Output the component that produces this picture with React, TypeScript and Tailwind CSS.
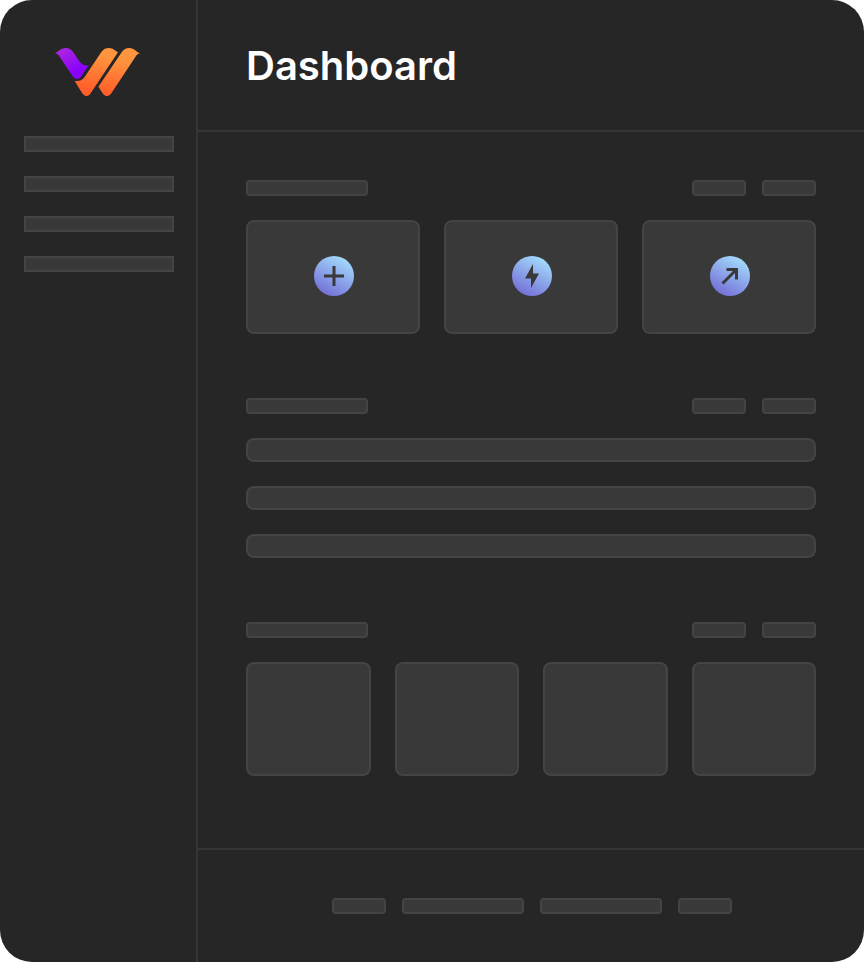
import React from "react";

type BlockProps = { className?: string; children?: React.ReactNode };

function Block({ className = "", children }: BlockProps) {
  return <div className={`border-2 border-[#444444] bg-[#393939] ${className}`}>{children}</div>;
}

function Logo() {
  return (
    <svg className="ml-[31px] h-12 w-[84px] overflow-visible" viewBox="30 30 252 144" fill="none">
      <defs>
        <linearGradient id="violet" x1="48" y1="30" x2="104" y2="118" gradientUnits="userSpaceOnUse">
          <stop stopColor="#AD28DC" />
          <stop offset="0.85" stopColor="#8800FF" />
        </linearGradient>
        <linearGradient id="orange" x1="190" y1="60" x2="172" y2="160" gradientUnits="userSpaceOnUse">
          <stop stopColor="#FF943E" />
          <stop offset="1" stopColor="#FF5F2A" />
        </linearGradient>
      </defs>
      <path
        d="M30 46C39 43 45 30 62 30C73 30 79 35 85 43L103 70C110 80 119 84 133 82C127 86 125 91 121 97L109 115C103 126 90 126 83 115L44 56C40 50 36 47 30 46Z"
        fill="url(#violet)"
      />
      <path
        d="M88 129C104 130 112 127 119 117L167 45C174 34 182 30 192 30C205 30 211 39 219 43L140 161C134 170 131 174 125 174C118 174 115 170 109 161L98 144C94 137 92 132 88 129Z"
        fill="url(#orange)"
      />
      <path
        d="M160 146L229 44C236 34 243 30 253 30C269 30 274 43 285 46C278 48 275 51 271 57L202 161C196 170 193 174 186 174C179 174 176 170 170 161Z"
        fill="url(#orange)"
      />
    </svg>
  );
}

function ActionCard({ children }: { children: React.ReactNode }) {
  return (
    <Block className="flex h-[114px] items-center justify-center rounded-lg pb-0.5 pl-0.5">
      <div className="flex size-10 items-center justify-center rounded-full bg-[linear-gradient(209deg,#A5E0FE_8%,#7066D3_95%)]">
        <svg className="size-10" viewBox="0 0 40 40" fill="none">
          {children}
        </svg>
      </div>
    </Block>
  );
}

function SectionHeading() {
  return (
    <div className="mb-6 flex gap-4">
      <Block className="mr-auto h-4 w-[122px] rounded" />
      <Block className="h-4 w-[54px] rounded" />
      <Block className="h-4 w-[54px] rounded" />
    </div>
  );
}

export default function App() {
  return (
    <div className="bg-white font-['Inter',sans-serif]">
      <div className="flex h-[962px] w-[864px] overflow-hidden rounded-[32px] bg-[#262626]">
        <aside className="flex w-[198px] shrink-0 flex-col border-r-2 border-[#353535] pl-6 pt-12">
          <Logo />
          <nav className="mt-10 flex flex-col gap-6">
            <Block className="h-4 w-[150px]" />
            <Block className="h-4 w-[150px]" />
            <Block className="h-4 w-[150px]" />
            <Block className="h-4 w-[150px]" />
          </nav>
        </aside>
        <div className="flex grow flex-col">
          <header className="flex h-[132px] shrink-0 items-center border-b-2 border-[#353535] px-12 pt-0.5">
            <h1 className="text-[40px] leading-[48px] font-semibold text-white">Dashboard</h1>
          </header>
          <main className="flex grow flex-col gap-16 px-12 pt-12">
            <section>
              <SectionHeading />
              <div className="grid grid-cols-3 gap-6">
                <ActionCard>
                  <path d="M20 10V30M10 20H30" stroke="#393939" strokeWidth="3" />
                </ActionCard>
                <ActionCard>
                  <path d="M21 8V17.5H27L19 32V22.5H13Z" fill="#393939" />
                </ActionCard>
                <ActionCard>
                  <path d="M12.5 27.5L26.5 13.5M16.5 13.5H26.5V23.5" stroke="#393939" strokeWidth="3" />
                </ActionCard>
              </div>
            </section>
            <section>
              <SectionHeading />
              <div className="flex flex-col gap-6">
                <Block className="h-6 rounded-lg" />
                <Block className="h-6 rounded-lg" />
                <Block className="h-6 rounded-lg" />
              </div>
            </section>
            <section>
              <SectionHeading />
              <div className="grid grid-cols-4 gap-6">
                <Block className="h-[114px] rounded-lg" />
                <Block className="h-[114px] rounded-lg" />
                <Block className="h-[114px] rounded-lg" />
                <Block className="h-[114px] rounded-lg" />
              </div>
            </section>
          </main>
          <footer className="flex h-[114px] shrink-0 items-center justify-center gap-4 border-t-2 border-[#353535] pl-0.5">
            <Block className="h-4 w-[54px] rounded" />
            <Block className="h-4 w-[122px] rounded" />
            <Block className="h-4 w-[122px] rounded" />
            <Block className="h-4 w-[54px] rounded" />
          </footer>
        </div>
      </div>
    </div>
  );
}
